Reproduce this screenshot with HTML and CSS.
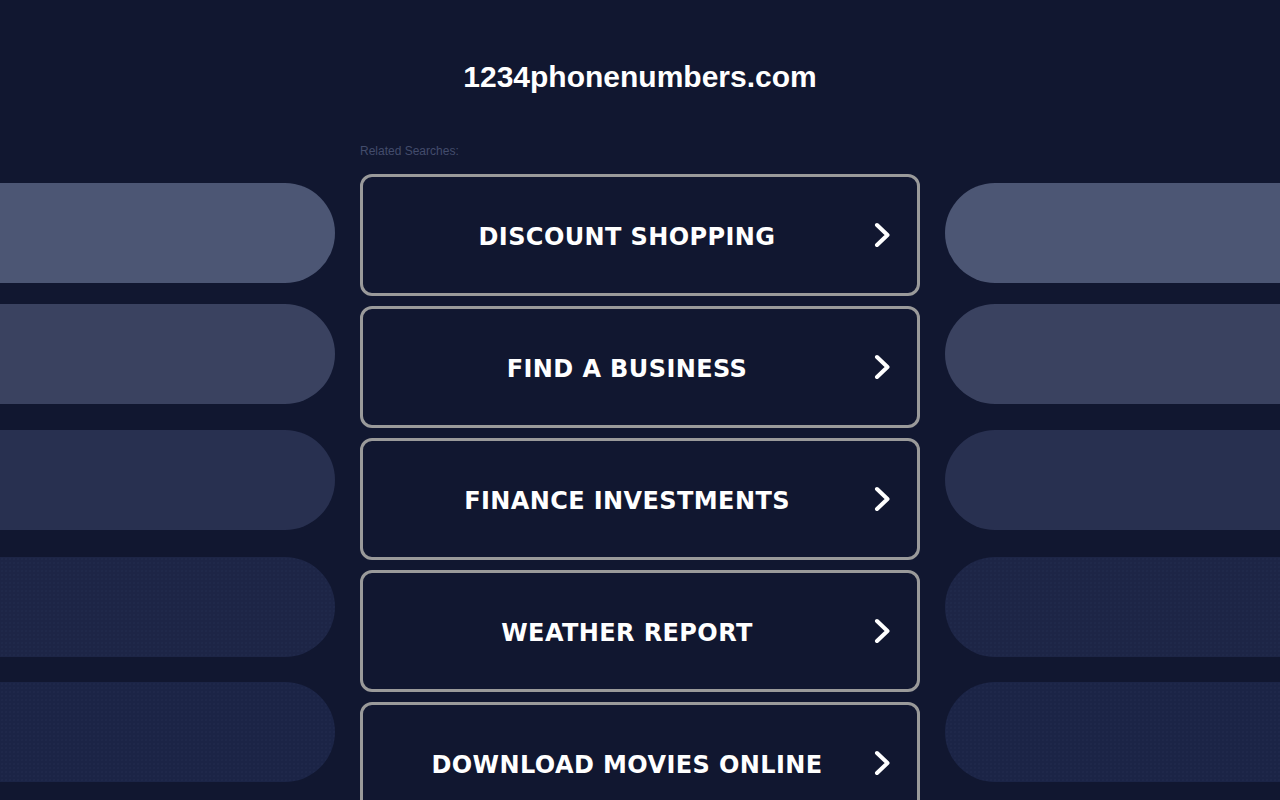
FILE: index.html
```html
<!DOCTYPE html>
<html lang="en">
<head>
<meta charset="utf-8">
<title>1234phonenumbers.com</title>
<link rel="stylesheet" href="styles.css">
</head>
<body>
<div class="page">
  <div class="side side-left">
    <div class="pill pill-1"></div>
    <div class="pill pill-2"></div>
    <div class="pill pill-3"></div>
    <div class="pill pill-4"></div>
    <div class="pill pill-5"></div>
  </div>
  <main class="center">
    <h1 class="domain">1234phonenumbers.com</h1>
    <div class="related">Related Searches:</div>
    <div class="links">
      <a class="link" href="#"><span class="label">DISCOUNT SHOPPING</span><svg class="chev" viewBox="0 0 16 26" width="16" height="26"><path d="M3 3 L13.5 13 L3 23" fill="none" stroke="#fff" stroke-width="4" stroke-linecap="round" stroke-linejoin="round"/></svg></a>
      <a class="link" href="#"><span class="label">FIND A BUSINESS</span><svg class="chev" viewBox="0 0 16 26" width="16" height="26"><path d="M3 3 L13.5 13 L3 23" fill="none" stroke="#fff" stroke-width="4" stroke-linecap="round" stroke-linejoin="round"/></svg></a>
      <a class="link" href="#"><span class="label">FINANCE INVESTMENTS</span><svg class="chev" viewBox="0 0 16 26" width="16" height="26"><path d="M3 3 L13.5 13 L3 23" fill="none" stroke="#fff" stroke-width="4" stroke-linecap="round" stroke-linejoin="round"/></svg></a>
      <a class="link" href="#"><span class="label">WEATHER REPORT</span><svg class="chev" viewBox="0 0 16 26" width="16" height="26"><path d="M3 3 L13.5 13 L3 23" fill="none" stroke="#fff" stroke-width="4" stroke-linecap="round" stroke-linejoin="round"/></svg></a>
      <a class="link" href="#"><span class="label">DOWNLOAD MOVIES ONLINE</span><svg class="chev" viewBox="0 0 16 26" width="16" height="26"><path d="M3 3 L13.5 13 L3 23" fill="none" stroke="#fff" stroke-width="4" stroke-linecap="round" stroke-linejoin="round"/></svg></a>
    </div>
  </main>
  <div class="side side-right">
    <div class="pill pill-1"></div>
    <div class="pill pill-2"></div>
    <div class="pill pill-3"></div>
    <div class="pill pill-4"></div>
    <div class="pill pill-5"></div>
  </div>
</div>
</body>
</html>
```
FILE: styles.css
```css
html, body {
  margin: 0;
  padding: 0;
  background: #111730;
  overflow: hidden;
  height: 800px;
}

body {
  font-family: "Liberation Sans", Arial, sans-serif;
  color: #fff;
}

.page {
  display: grid;
  grid-template-columns: 335px 560px 335px;
  column-gap: 25px;
  width: 1280px;
}

.side {
  display: flex;
  flex-direction: column;
  padding-top: 183px;
}

.pill {
  height: 100px;
}

.side-left .pill {
  border-radius: 0 50px 50px 0;
}

.side-right .pill {
  border-radius: 50px 0 0 50px;
}

.pill-1 { background: #4c5674; }
.pill-2 { background: #3a4260; margin-top: 21px; }
.pill-3 { background: #283050; margin-top: 26px; }
.pill-4 {
  background-color: #1d2546;
  background-image: radial-gradient(circle, rgba(60, 72, 110, 0.14) 0.6px, transparent 0.9px);
  background-size: 4px 4px;
  margin-top: 27px;
}
.pill-5 {
  background-color: #1b2446;
  background-image: radial-gradient(circle, rgba(60, 72, 110, 0.14) 0.6px, transparent 0.9px);
  background-size: 4px 4px;
  margin-top: 25px;
}

.center {
  display: flex;
  flex-direction: column;
  padding-top: 59px;
}

.domain {
  margin: 0;
  font-size: 30px;
  line-height: 36px;
  font-weight: bold;
  text-align: center;
  color: #fff;
}

.related {
  margin-top: 49px;
  font-size: 12px;
  line-height: 14px;
  color: #434c6c;
}

.links {
  display: flex;
  flex-direction: column;
  gap: 10px;
  margin-top: 16px;
}

.link {
  display: flex;
  align-items: center;
  height: 116px;
  border: 3px solid #9a9a9a;
  border-radius: 12px;
  background: #111730;
  text-decoration: none;
  color: #fff;
}

.label {
  flex: 1;
  padding-left: 17px;
  padding-top: 4px;
  text-align: center;
  font-family: "DejaVu Sans", Verdana, sans-serif;
  font-weight: bold;
  font-size: 24px;
  letter-spacing: 0.4px;
  color: #fff;
}

.chev {
  flex: none;
  margin-right: 27px;
  margin-left: 0;
}
```
